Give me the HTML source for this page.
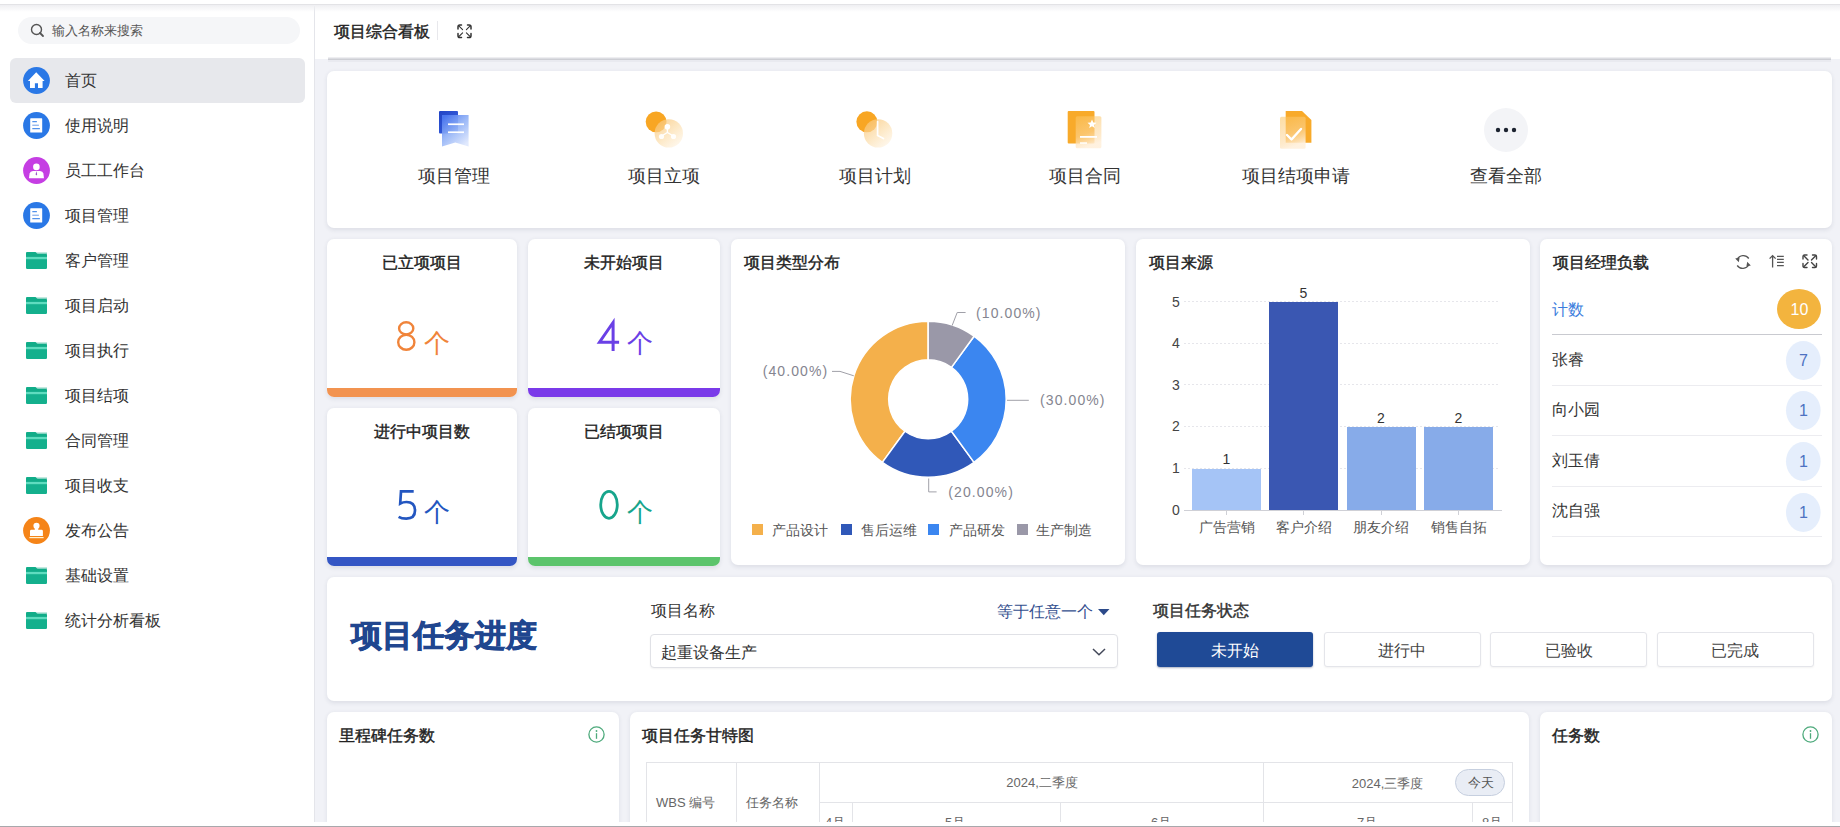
<!DOCTYPE html><html><head><meta charset="utf-8"><style>
*{box-sizing:border-box;margin:0;padding:0}
html,body{width:1840px;height:827px;overflow:hidden;background:#fff;font-family:"Liberation Sans",sans-serif;color:#333}
.abs{position:absolute}
svg{position:absolute;overflow:visible}
.tx{position:absolute;white-space:nowrap;line-height:1}
</style></head><body>
<div class="abs" style="left:315px;top:6px;width:1525px;height:816px;background:#f1f2f7"></div>
<div class="abs" style="left:314px;top:6px;width:1px;height:816px;background:#e4e5ea"></div>
<div class="abs" style="left:315px;top:6px;width:1525px;height:53px;background:#fff"></div>
<div class="abs" style="left:0px;top:0px;width:1840px;height:4px;background:#fff"></div>
<div class="abs" style="left:0px;top:4px;width:1840px;height:1px;background:#e3e3e6"></div>
<div class="abs" style="left:0px;top:5px;width:1840px;height:7px;background:linear-gradient(#efeff2,rgba(255,255,255,0))"></div>
<div class="abs" style="left:328px;top:57px;width:1503px;height:1px;background:#eeeef1"></div>
<div class="abs" style="left:328px;top:58px;width:1503px;height:1px;background:#dcdde2"></div>
<div class="abs" style="left:328px;top:59px;width:1503px;height:1px;background:#cdced4"></div>
<div class="abs" style="left:328px;top:60px;width:1503px;height:2px;background:#e9eaf0"></div>
<div class="abs" style="left:0px;top:822px;width:1840px;height:4px;background:#fff"></div>
<div class="abs" style="left:0px;top:826px;width:1840px;height:1px;background:#a8a8ac"></div>
<div class="abs" style="left:18px;top:17px;width:282px;height:27px;background:#f5f6f8;border-radius:14px"></div>
<svg style="left:30px;top:23px" width="16" height="16" viewBox="0 0 16 16"><circle cx="6.5" cy="6.5" r="5" fill="none" stroke="#555" stroke-width="1.4"/><line x1="10" y1="10" x2="13" y2="13" stroke="#555" stroke-width="1.8" stroke-linecap="round"/></svg>
<div class="tx" style="left:52px;top:24.00px;font-size:13px;color:#555;font-weight:normal;">输入名称来搜索</div>
<div class="abs" style="left:10px;top:58px;width:295px;height:45px;background:#e7e8ec;border-radius:6px"></div>
<svg style="left:23px;top:67.0px" width="27" height="27" viewBox="0 0 27 27"><circle cx="13.5" cy="13.5" r="13.4" fill="#2a78e6"/><path d="M13.2 5.3 L21.6 14 L19.6 14 L19.6 20.9 L15 20.9 L15 16.2 L11.9 16.2 L11.9 20.9 L7 20.9 L7 14 L4.9 14 Z" fill="#fff"/></svg>
<div class="tx" style="left:65px;top:73.30px;font-size:16px;color:#333;font-weight:normal;">首页</div>
<svg style="left:23px;top:112.0px" width="27" height="27" viewBox="0 0 27 27"><circle cx="13.5" cy="13.5" r="13.4" fill="#2a78e6"/><rect x="7.2" y="6.3" width="12" height="14.2" rx="0.6" fill="#fff"/><rect x="9.3" y="9.2" width="4.6" height="1" fill="#2a78e6"/><rect x="9.3" y="12.7" width="6.6" height="1" fill="#6b9ce8"/><rect x="9.3" y="16.2" width="7.6" height="1" fill="#2a78e6"/></svg>
<div class="tx" style="left:65px;top:118.30px;font-size:16px;color:#333;font-weight:normal;">使用说明</div>
<svg style="left:23px;top:157.0px" width="27" height="27" viewBox="0 0 27 27"><circle cx="13.5" cy="13.5" r="13.4" fill="#c53ee3"/><circle cx="13.4" cy="9.9" r="3.3" fill="#fff"/><path d="M6 21.2 L6.6 16.5 Q7.2 14 10 14 L17 14 Q19.8 14 20.4 16.5 L21 21.2 Z" fill="#fff"/><path d="M13.4 14 L12.6 17.5 L13.4 18.6 L14.2 17.5 Z" fill="#9b55c8"/></svg>
<div class="tx" style="left:65px;top:163.30px;font-size:16px;color:#333;font-weight:normal;">员工工作台</div>
<svg style="left:23px;top:202.0px" width="27" height="27" viewBox="0 0 27 27"><circle cx="13.5" cy="13.5" r="13.4" fill="#2a78e6"/><rect x="7.2" y="6.3" width="12" height="14.2" rx="0.6" fill="#fff"/><rect x="9.3" y="9.2" width="4.6" height="1" fill="#2a78e6"/><rect x="9.3" y="12.7" width="6.6" height="1" fill="#6b9ce8"/><rect x="9.3" y="16.2" width="7.6" height="1" fill="#2a78e6"/></svg>
<div class="tx" style="left:65px;top:208.30px;font-size:16px;color:#333;font-weight:normal;">项目管理</div>
<svg style="left:26px;top:251.8px" width="21" height="17" viewBox="0 0 21 17"><path d="M0 1.2 Q0 0 1.2 0 L9.5 0 L11.5 1.9 L19.8 1.9 Q21 1.9 21 3.1 L21 15.8 Q21 17 19.8 17 L1.2 17 Q0 17 0 15.8 Z" fill="#14b08d"/><rect x="0" y="4.8" width="21" height="2.4" fill="#5fdcbf"/><rect x="0" y="0.5" width="21" height="4.3" fill="#0ea884" opacity="0.5"/></svg>
<div class="tx" style="left:65px;top:253.30px;font-size:16px;color:#333;font-weight:normal;">客户管理</div>
<svg style="left:26px;top:296.8px" width="21" height="17" viewBox="0 0 21 17"><path d="M0 1.2 Q0 0 1.2 0 L9.5 0 L11.5 1.9 L19.8 1.9 Q21 1.9 21 3.1 L21 15.8 Q21 17 19.8 17 L1.2 17 Q0 17 0 15.8 Z" fill="#14b08d"/><rect x="0" y="4.8" width="21" height="2.4" fill="#5fdcbf"/><rect x="0" y="0.5" width="21" height="4.3" fill="#0ea884" opacity="0.5"/></svg>
<div class="tx" style="left:65px;top:298.30px;font-size:16px;color:#333;font-weight:normal;">项目启动</div>
<svg style="left:26px;top:341.8px" width="21" height="17" viewBox="0 0 21 17"><path d="M0 1.2 Q0 0 1.2 0 L9.5 0 L11.5 1.9 L19.8 1.9 Q21 1.9 21 3.1 L21 15.8 Q21 17 19.8 17 L1.2 17 Q0 17 0 15.8 Z" fill="#14b08d"/><rect x="0" y="4.8" width="21" height="2.4" fill="#5fdcbf"/><rect x="0" y="0.5" width="21" height="4.3" fill="#0ea884" opacity="0.5"/></svg>
<div class="tx" style="left:65px;top:343.30px;font-size:16px;color:#333;font-weight:normal;">项目执行</div>
<svg style="left:26px;top:386.8px" width="21" height="17" viewBox="0 0 21 17"><path d="M0 1.2 Q0 0 1.2 0 L9.5 0 L11.5 1.9 L19.8 1.9 Q21 1.9 21 3.1 L21 15.8 Q21 17 19.8 17 L1.2 17 Q0 17 0 15.8 Z" fill="#14b08d"/><rect x="0" y="4.8" width="21" height="2.4" fill="#5fdcbf"/><rect x="0" y="0.5" width="21" height="4.3" fill="#0ea884" opacity="0.5"/></svg>
<div class="tx" style="left:65px;top:388.30px;font-size:16px;color:#333;font-weight:normal;">项目结项</div>
<svg style="left:26px;top:431.8px" width="21" height="17" viewBox="0 0 21 17"><path d="M0 1.2 Q0 0 1.2 0 L9.5 0 L11.5 1.9 L19.8 1.9 Q21 1.9 21 3.1 L21 15.8 Q21 17 19.8 17 L1.2 17 Q0 17 0 15.8 Z" fill="#14b08d"/><rect x="0" y="4.8" width="21" height="2.4" fill="#5fdcbf"/><rect x="0" y="0.5" width="21" height="4.3" fill="#0ea884" opacity="0.5"/></svg>
<div class="tx" style="left:65px;top:433.30px;font-size:16px;color:#333;font-weight:normal;">合同管理</div>
<svg style="left:26px;top:476.8px" width="21" height="17" viewBox="0 0 21 17"><path d="M0 1.2 Q0 0 1.2 0 L9.5 0 L11.5 1.9 L19.8 1.9 Q21 1.9 21 3.1 L21 15.8 Q21 17 19.8 17 L1.2 17 Q0 17 0 15.8 Z" fill="#14b08d"/><rect x="0" y="4.8" width="21" height="2.4" fill="#5fdcbf"/><rect x="0" y="0.5" width="21" height="4.3" fill="#0ea884" opacity="0.5"/></svg>
<div class="tx" style="left:65px;top:478.30px;font-size:16px;color:#333;font-weight:normal;">项目收支</div>
<svg style="left:23px;top:517.0px" width="27" height="27" viewBox="0 0 27 27"><circle cx="13.5" cy="13.5" r="13.4" fill="#f58418"/><path d="M13.5 5.8 Q16.6 5.8 16.6 8.8 Q16.6 10.8 15.2 11.8 L15.2 12.8 L18.6 12.8 Q19.9 12.8 19.9 14.2 L19.9 18.9 L7 18.9 L7 14.2 Q7 12.8 8.4 12.8 L11.8 12.8 L11.8 11.8 Q10.4 10.8 10.4 8.8 Q10.4 5.8 13.5 5.8 Z" fill="#fff"/><rect x="6.4" y="20" width="14.2" height="1.2" fill="#fff3d0"/></svg>
<div class="tx" style="left:65px;top:523.30px;font-size:16px;color:#333;font-weight:normal;">发布公告</div>
<svg style="left:26px;top:566.8px" width="21" height="17" viewBox="0 0 21 17"><path d="M0 1.2 Q0 0 1.2 0 L9.5 0 L11.5 1.9 L19.8 1.9 Q21 1.9 21 3.1 L21 15.8 Q21 17 19.8 17 L1.2 17 Q0 17 0 15.8 Z" fill="#14b08d"/><rect x="0" y="4.8" width="21" height="2.4" fill="#5fdcbf"/><rect x="0" y="0.5" width="21" height="4.3" fill="#0ea884" opacity="0.5"/></svg>
<div class="tx" style="left:65px;top:568.30px;font-size:16px;color:#333;font-weight:normal;">基础设置</div>
<svg style="left:26px;top:611.8px" width="21" height="17" viewBox="0 0 21 17"><path d="M0 1.2 Q0 0 1.2 0 L9.5 0 L11.5 1.9 L19.8 1.9 Q21 1.9 21 3.1 L21 15.8 Q21 17 19.8 17 L1.2 17 Q0 17 0 15.8 Z" fill="#14b08d"/><rect x="0" y="4.8" width="21" height="2.4" fill="#5fdcbf"/><rect x="0" y="0.5" width="21" height="4.3" fill="#0ea884" opacity="0.5"/></svg>
<div class="tx" style="left:65px;top:613.30px;font-size:16px;color:#333;font-weight:normal;">统计分析看板</div>
<div class="tx" style="left:333.5px;top:23.80px;font-size:16px;color:#222;font-weight:normal;;-webkit-text-stroke:0.4px #222">项目综合看板</div>
<div class="abs" style="left:437px;top:21px;width:1px;height:19px;background:#e8e8ec"></div>
<svg style="left:457px;top:23.5px" width="15" height="15" viewBox="0 0 15 15"><g fill="none" stroke="#333" stroke-width="1.5" stroke-linecap="round"><path d="M1 5 V2.8 Q1 1 2.8 1 H4.5"/><path d="M10.5 1 H12.2 Q14 1 14 2.8 V5"/><path d="M14 9.5 V11.7 Q14 13.5 12.2 13.5 H10.5"/><path d="M4.5 13.5 H2.8 Q1 13.5 1 11.7 V9.5"/><path d="M1.8 1.8 L5.6 5.6 M13.2 1.8 L9.4 5.6 M13.2 12.7 L9.4 8.9 M1.8 12.7 L5.6 8.9" stroke-width="1.1"/></g></svg>
<div class="abs" style="left:327px;top:71px;width:1505px;height:157px;background:#fff;border-radius:7px;box-shadow:0 1.5px 4px rgba(40,45,80,0.10)"></div>
<div class="tx" style="left:154.0px;width:600px;text-align:center;top:166.50px;font-size:18px;color:#333;font-weight:normal;">项目管理</div>
<div class="tx" style="left:364.4px;width:600px;text-align:center;top:166.50px;font-size:18px;color:#333;font-weight:normal;">项目立项</div>
<div class="tx" style="left:574.8px;width:600px;text-align:center;top:166.50px;font-size:18px;color:#333;font-weight:normal;">项目计划</div>
<div class="tx" style="left:785.2px;width:600px;text-align:center;top:166.50px;font-size:18px;color:#333;font-weight:normal;">项目合同</div>
<div class="tx" style="left:995.5999999999999px;width:600px;text-align:center;top:166.50px;font-size:18px;color:#333;font-weight:normal;">项目结项申请</div>
<div class="tx" style="left:1206.0px;width:600px;text-align:center;top:166.50px;font-size:18px;color:#333;font-weight:normal;">查看全部</div>
<svg style="left:436px;top:109px" width="36" height="40" viewBox="0 0 36 40"><defs><linearGradient id="g1" x1="0" y1="0" x2="1" y2="1"><stop offset="0" stop-color="#2143c4"/><stop offset="1" stop-color="#3a64e4"/></linearGradient><linearGradient id="g1b" x1="0.1" y1="0.05" x2="0.8" y2="1"><stop offset="0" stop-color="#4c78f0" stop-opacity="0.95"/><stop offset="0.45" stop-color="#8fb0f6" stop-opacity="0.9"/><stop offset="1" stop-color="#dfe8fd" stop-opacity="0.95"/></linearGradient></defs><rect x="3" y="2" width="19" height="22.5" rx="1" fill="url(#g1)"/><path d="M6 6 H32.6 V37.4 L19.3 33.6 L6 37.4 Z" fill="url(#g1b)"/><rect x="12" y="14.4" width="16" height="1.7" fill="#fff"/><rect x="12" y="22.4" width="16" height="1.7" fill="#fff"/></svg>
<svg style="left:634px;top:100px" width="50" height="50" viewBox="0 0 50 50"><defs><linearGradient id="g2" x1="0.15" y1="0.1" x2="0.85" y2="0.95"><stop offset="0" stop-color="#f9c77a" stop-opacity="0.75"/><stop offset="0.5" stop-color="#fcdfae" stop-opacity="0.7"/><stop offset="1" stop-color="#fef3e2" stop-opacity="0.6"/></linearGradient></defs><circle cx="22.1" cy="21.8" r="10.4" fill="#f8a623"/><circle cx="34.8" cy="33.4" r="14.2" fill="url(#g2)"/><circle cx="33.4" cy="26.8" r="2.8" fill="#fff"/><circle cx="27.5" cy="36.5" r="2.6" fill="#fff" opacity="0.9"/><circle cx="39.5" cy="36.5" r="2.6" fill="#fff" opacity="0.9"/><path d="M33.4 28 V33 M28.5 35.5 L33.4 32.5 L38.5 35.5" stroke="#fff" stroke-width="1.3" fill="none"/></svg>
<svg style="left:844px;top:100px" width="50" height="50" viewBox="0 0 50 50"><defs><linearGradient id="g3" x1="0.15" y1="0.1" x2="0.85" y2="0.95"><stop offset="0" stop-color="#f9c77a" stop-opacity="0.75"/><stop offset="0.5" stop-color="#fcdfae" stop-opacity="0.7"/><stop offset="1" stop-color="#fef3e2" stop-opacity="0.6"/></linearGradient></defs><circle cx="22.9" cy="21.8" r="10.5" fill="#f8a623"/><circle cx="34.1" cy="33.4" r="14.2" fill="url(#g3)"/><path d="M33.6 21.5 V35.5 L39.5 38.5" stroke="#fff" stroke-width="1.7" fill="none" stroke-linecap="round"/></svg>
<svg style="left:1055px;top:100px" width="50" height="50" viewBox="0 0 50 50"><defs><linearGradient id="g4" x1="0" y1="0" x2="0.3" y2="1"><stop offset="0" stop-color="#fbc25a" stop-opacity="0.6"/><stop offset="0.6" stop-color="#fdd79a" stop-opacity="0.6"/><stop offset="1" stop-color="#fff0dc" stop-opacity="0.9"/></linearGradient></defs><rect x="12.7" y="10.9" width="26.8" height="32.6" rx="1" fill="#f8aa2a"/><rect x="20.7" y="16.3" width="25.7" height="32" rx="1.5" fill="url(#g4)"/><path d="M37 19.5 L38.3 22.5 L41.5 22.8 L39 24.9 L39.8 28 L37 26.3 L34.2 28 L35 24.9 L32.5 22.8 L35.7 22.5 Z" fill="#fff"/><rect x="25" y="36" width="17" height="1.8" fill="#fff"/><rect x="25" y="42.3" width="7" height="1.5" fill="#fff"/></svg>
<svg style="left:1265px;top:100px" width="50" height="50" viewBox="0 0 50 50"><defs><linearGradient id="g5" x1="0" y1="0" x2="0.3" y2="1"><stop offset="0" stop-color="#fbc25a" stop-opacity="0.55"/><stop offset="0.6" stop-color="#fdd79a" stop-opacity="0.6"/><stop offset="1" stop-color="#fff0dc" stop-opacity="0.9"/></linearGradient></defs><path d="M20.7 10.9 H37 L46.4 20 V42.8 H20.7 Z" fill="#f8aa2a"/><rect x="15" y="16.7" width="25.6" height="32" rx="1.5" fill="url(#g5)"/><path d="M22 35 L26.5 39.5 L36 29" stroke="#fff" stroke-width="2.4" fill="none" stroke-linecap="round" stroke-linejoin="round"/></svg>
<svg style="left:1483.5px;top:108px" width="44" height="44" viewBox="0 0 44 44"><circle cx="22" cy="22" r="22" fill="#f3f4f7"/><circle cx="14" cy="22" r="2.2" fill="#1c2330"/><circle cx="22" cy="22" r="2.2" fill="#1c2330"/><circle cx="30" cy="22" r="2.2" fill="#1c2330"/></svg>
<div class="abs" style="left:327px;top:239px;width:190px;height:158px;background:#fff;border-radius:7px;box-shadow:0 1.5px 4px rgba(40,45,80,0.10)"></div>
<div class="abs" style="left:327px;top:388px;width:190px;height:9px;background:#f29350;border-radius:0 0 7px 7px"></div>
<div class="tx" style="left:122.0px;width:600px;text-align:center;top:254.80px;font-size:16px;color:#222;font-weight:normal;;-webkit-text-stroke:0.4px #222">已立项项目</div>
<div class="abs" style="left:528px;top:239px;width:192px;height:158px;background:#fff;border-radius:7px;box-shadow:0 1.5px 4px rgba(40,45,80,0.10)"></div>
<div class="abs" style="left:528px;top:388px;width:192px;height:9px;background:#7a3ae9;border-radius:0 0 7px 7px"></div>
<div class="tx" style="left:324.0px;width:600px;text-align:center;top:254.80px;font-size:16px;color:#222;font-weight:normal;;-webkit-text-stroke:0.4px #222">未开始项目</div>
<div class="abs" style="left:327px;top:408px;width:190px;height:158px;background:#fff;border-radius:7px;box-shadow:0 1.5px 4px rgba(40,45,80,0.10)"></div>
<div class="abs" style="left:327px;top:557px;width:190px;height:9px;background:#3456c4;border-radius:0 0 7px 7px"></div>
<div class="tx" style="left:122.0px;width:600px;text-align:center;top:423.80px;font-size:16px;color:#222;font-weight:normal;;-webkit-text-stroke:0.4px #222">进行中项目数</div>
<div class="abs" style="left:528px;top:408px;width:192px;height:158px;background:#fff;border-radius:7px;box-shadow:0 1.5px 4px rgba(40,45,80,0.10)"></div>
<div class="abs" style="left:528px;top:557px;width:192px;height:9px;background:#5cc46c;border-radius:0 0 7px 7px"></div>
<div class="tx" style="left:324.0px;width:600px;text-align:center;top:423.80px;font-size:16px;color:#222;font-weight:normal;;-webkit-text-stroke:0.4px #222">已结项项目</div>
<svg style="left:0;top:0" width="1840" height="827"><g fill="none" stroke="#f0843a" stroke-width="2.4"><ellipse cx="406.2" cy="328.4" rx="7.1" ry="6.1"/><ellipse cx="406.3" cy="342.2" rx="8.1" ry="7.5"/></g><g fill="none" stroke="#6a40e6" stroke-width="3"><path d="M613.1 350.9 V322.5 L599.5 342.2 H619.1" stroke-linejoin="miter"/></g><path d="M413.7 491.3 H401 L400.2 503.6 Q403 502 406.5 502 Q415 502 415 510.5 Q415 518.6 406.3 518.6 Q401.5 518.6 398.6 516.8" fill="none" stroke="#2356c0" stroke-width="2.7"/><ellipse cx="609" cy="504.8" rx="8.3" ry="13.5" fill="none" stroke="#17a58c" stroke-width="2.8"/></svg>
<div class="tx" style="left:423.7px;top:329.7px;font-size:26px;color:#f0843a">个</div>
<div class="tx" style="left:626.8px;top:329.7px;font-size:26px;color:#6a40e6">个</div>
<div class="tx" style="left:424.1px;top:498.7px;font-size:26px;color:#2356c0">个</div>
<div class="tx" style="left:626.5px;top:498.7px;font-size:26px;color:#17a58c">个</div>
<div class="abs" style="left:731px;top:239px;width:394px;height:326px;background:#fff;border-radius:7px;box-shadow:0 1.5px 4px rgba(40,45,80,0.10)"></div>
<div class="abs" style="left:1136px;top:239px;width:394px;height:326px;background:#fff;border-radius:7px;box-shadow:0 1.5px 4px rgba(40,45,80,0.10)"></div>
<div class="abs" style="left:1540px;top:239px;width:292px;height:326px;background:#fff;border-radius:7px;box-shadow:0 1.5px 4px rgba(40,45,80,0.10)"></div>
<div class="tx" style="left:743.5px;top:254.80px;font-size:16px;color:#222;font-weight:normal;;-webkit-text-stroke:0.4px #222">项目类型分布</div>
<div class="tx" style="left:1148.5px;top:254.80px;font-size:16px;color:#222;font-weight:normal;;-webkit-text-stroke:0.4px #222">项目来源</div>
<div class="tx" style="left:1552.5px;top:254.80px;font-size:16px;color:#222;font-weight:normal;;-webkit-text-stroke:0.4px #222">项目经理负载</div>
<svg style="left:0;top:0" width="1840" height="827"><path d="M928.20 321.30 A78 78 0 0 0 882.35 462.40 L904.98 431.26 A39.5 39.5 0 0 1 928.20 359.80 Z" fill="#f4b04b" stroke="#fff" stroke-width="1.5" stroke-linejoin="round"/><path d="M882.35 462.40 A78 78 0 0 0 974.05 462.40 L951.42 431.26 A39.5 39.5 0 0 1 904.98 431.26 Z" fill="#3058b8" stroke="#fff" stroke-width="1.5" stroke-linejoin="round"/><path d="M974.05 462.40 A78 78 0 0 0 974.05 336.20 L951.42 367.34 A39.5 39.5 0 0 1 951.42 431.26 Z" fill="#3b86f0" stroke="#fff" stroke-width="1.5" stroke-linejoin="round"/><path d="M974.05 336.20 A78 78 0 0 0 928.20 321.30 L928.20 359.80 A39.5 39.5 0 0 1 951.42 367.34 Z" fill="#9a98a8" stroke="#fff" stroke-width="1.5" stroke-linejoin="round"/><g fill="none" stroke="#a0a0a8" stroke-width="1"><path d="M952.1 325.6 L957.2 312.5 L965.6 312.5"/><path d="M1007 400.3 L1028.8 400.3"/><path d="M928.7 478.5 L928.7 491.9 L936.6 491.9"/><path d="M853.8 375.8 L840 371.4 L832 371.4"/></g></svg>
<div class="tx" style="left:976px;top:305.70px;font-size:14px;color:#858590;font-weight:normal;letter-spacing:1.1px">(10.00%)</div>
<div class="tx" style="left:1040px;top:393.30px;font-size:14px;color:#858590;font-weight:normal;letter-spacing:1.1px">(30.00%)</div>
<div class="tx" style="left:948.3px;top:484.80px;font-size:14px;color:#858590;font-weight:normal;letter-spacing:1.1px">(20.00%)</div>
<div class="tx" style="left:762.7px;top:364.20px;font-size:14px;color:#858590;font-weight:normal;letter-spacing:1.1px">(40.00%)</div>
<div class="abs" style="left:752px;top:524px;width:11px;height:11px;background:#f4b04b"></div>
<div class="tx" style="left:772.3px;top:524.15px;font-size:13.5px;color:#555;font-weight:normal;">产品设计</div>
<div class="abs" style="left:840.5px;top:524px;width:11px;height:11px;background:#3058b8"></div>
<div class="tx" style="left:861px;top:524.15px;font-size:13.5px;color:#555;font-weight:normal;">售后运维</div>
<div class="abs" style="left:928px;top:524px;width:11px;height:11px;background:#3b86f0"></div>
<div class="tx" style="left:948.5px;top:524.15px;font-size:13.5px;color:#555;font-weight:normal;">产品研发</div>
<div class="abs" style="left:1016.5px;top:524px;width:11px;height:11px;background:#9a98a8"></div>
<div class="tx" style="left:1036px;top:524.15px;font-size:13.5px;color:#555;font-weight:normal;">生产制造</div>
<div class="tx" style="left:876px;width:600px;text-align:center;top:502.60px;font-size:14px;color:#444;font-weight:normal;">0</div>
<div class="tx" style="left:876px;width:600px;text-align:center;top:461.00px;font-size:14px;color:#444;font-weight:normal;">1</div>
<div class="abs" style="left:1184px;top:467.59999999999997px;width:314px;height:1px;background-image:linear-gradient(90deg,#e6e6eb 60%,transparent 60%);background-size:4px 1px"></div>
<div class="tx" style="left:876px;width:600px;text-align:center;top:419.40px;font-size:14px;color:#444;font-weight:normal;">2</div>
<div class="abs" style="left:1184px;top:426.0px;width:314px;height:1px;background-image:linear-gradient(90deg,#e6e6eb 60%,transparent 60%);background-size:4px 1px"></div>
<div class="tx" style="left:876px;width:600px;text-align:center;top:377.80px;font-size:14px;color:#444;font-weight:normal;">3</div>
<div class="abs" style="left:1184px;top:384.4px;width:314px;height:1px;background-image:linear-gradient(90deg,#e6e6eb 60%,transparent 60%);background-size:4px 1px"></div>
<div class="tx" style="left:876px;width:600px;text-align:center;top:336.20px;font-size:14px;color:#444;font-weight:normal;">4</div>
<div class="abs" style="left:1184px;top:342.79999999999995px;width:314px;height:1px;background-image:linear-gradient(90deg,#e6e6eb 60%,transparent 60%);background-size:4px 1px"></div>
<div class="tx" style="left:876px;width:600px;text-align:center;top:294.60px;font-size:14px;color:#444;font-weight:normal;">5</div>
<div class="abs" style="left:1184px;top:301.2px;width:314px;height:1px;background-image:linear-gradient(90deg,#e6e6eb 60%,transparent 60%);background-size:4px 1px"></div>
<div class="abs" style="left:1184px;top:510px;width:318px;height:1px;background:#cfd0d6"></div>
<div class="abs" style="left:1192px;top:468.59999999999997px;width:69px;height:41.60000000000002px;background:#a5c4f6"></div>
<div class="tx" style="left:926.5px;width:600px;text-align:center;top:452.30px;font-size:14px;color:#333;font-weight:normal;">1</div>
<div class="abs" style="left:1226px;top:511px;width:1px;height:4px;background:#cfd0d6"></div>
<div class="tx" style="left:926.5px;width:600px;text-align:center;top:519.90px;font-size:14px;color:#555;font-weight:normal;">广告营销</div>
<div class="abs" style="left:1269px;top:302.2px;width:69px;height:208.0px;background:#3a57b2"></div>
<div class="tx" style="left:1003.5px;width:600px;text-align:center;top:285.90px;font-size:14px;color:#333;font-weight:normal;">5</div>
<div class="abs" style="left:1303px;top:511px;width:1px;height:4px;background:#cfd0d6"></div>
<div class="tx" style="left:1003.5px;width:600px;text-align:center;top:519.90px;font-size:14px;color:#555;font-weight:normal;">客户介绍</div>
<div class="abs" style="left:1346.5px;top:427.0px;width:69px;height:83.19999999999999px;background:#87abe9"></div>
<div class="tx" style="left:1081.0px;width:600px;text-align:center;top:410.70px;font-size:14px;color:#333;font-weight:normal;">2</div>
<div class="abs" style="left:1380.5px;top:511px;width:1px;height:4px;background:#cfd0d6"></div>
<div class="tx" style="left:1081.0px;width:600px;text-align:center;top:519.90px;font-size:14px;color:#555;font-weight:normal;">朋友介绍</div>
<div class="abs" style="left:1424px;top:427.0px;width:69px;height:83.19999999999999px;background:#87abe9"></div>
<div class="tx" style="left:1158.5px;width:600px;text-align:center;top:410.70px;font-size:14px;color:#333;font-weight:normal;">2</div>
<div class="abs" style="left:1458px;top:511px;width:1px;height:4px;background:#cfd0d6"></div>
<div class="tx" style="left:1158.5px;width:600px;text-align:center;top:519.90px;font-size:14px;color:#555;font-weight:normal;">销售自拓</div>
<svg style="left:1734px;top:253px" width="18" height="18" viewBox="0 0 18 18"><g fill="none" stroke="#555" stroke-width="1.3"><path d="M3.2 6.5 A6.8 6.8 0 0 1 14.8 5.5"/><path d="M14.8 11.5 A6.8 6.8 0 0 1 3.2 12.5"/></g><path d="M1.2 5.5 L4.8 9.2 L5.6 4.4 Z" fill="#555"/><path d="M16.8 12.5 L13.2 8.8 L12.4 13.6 Z" fill="#555"/></svg>
<svg style="left:1768px;top:254px" width="18" height="15" viewBox="0 0 18 15"><g stroke="#555" fill="none"><path d="M4.6 13.5 V1.8 M1.6 4.6 L4.6 1.6 L7.6 4.6" stroke-width="1.3"/><path d="M9 2.4 H15.8 M9 5.4 H15.8 M9 8.4 H15.8 M9 11.7 H15.8" stroke-width="1.2"/></g></svg>
<svg style="left:1802px;top:254px" width="16" height="15" viewBox="0 0 16 15"><g fill="none" stroke="#444" stroke-width="1.4" stroke-linecap="round"><path d="M1 5 V2.5 Q1 1 2.5 1 H5"/><path d="M10.5 1 H13 Q14.5 1 14.5 2.5 V5"/><path d="M14.5 9.5 V12 Q14.5 13.5 13 13.5 H10.5"/><path d="M5 13.5 H2.5 Q1 13.5 1 12 V9.5"/><path d="M1.8 1.8 L6 6 M13.7 1.8 L9.5 6 M13.7 12.7 L9.5 8.5 M1.8 12.7 L6 8.5"/></g></svg>
<div class="tx" style="left:1552px;top:302.20px;font-size:16px;color:#3b7ddd;font-weight:normal;">计数</div>
<svg style="left:1777px;top:289px" width="44" height="40" viewBox="0 0 44 40"><ellipse cx="22" cy="20" rx="22" ry="20" fill="#f3b43e"/></svg>
<div class="tx" style="left:1499.5px;width:600px;text-align:center;top:301.80px;font-size:16px;color:#fff;font-weight:normal;">10</div>
<div class="abs" style="left:1552px;top:333.5px;width:270px;height:1px;background:#c9cad0"></div>
<div class="tx" style="left:1552px;top:351.50px;font-size:16px;color:#333;font-weight:normal;">张睿</div>
<svg style="left:1786px;top:340.8px" width="35" height="39" viewBox="0 0 35 39"><ellipse cx="17.3" cy="19.5" rx="17.3" ry="19.5" fill="#e5eefc"/></svg>
<div class="tx" style="left:1503.5px;width:600px;text-align:center;top:352.70px;font-size:16px;color:#4d72c2;font-weight:normal;">7</div>
<div class="abs" style="left:1552px;top:384.5px;width:270px;height:1px;background:#ececf0"></div>
<div class="tx" style="left:1552px;top:402.10px;font-size:16px;color:#333;font-weight:normal;">向小园</div>
<svg style="left:1786px;top:391.40000000000003px" width="35" height="39" viewBox="0 0 35 39"><ellipse cx="17.3" cy="19.5" rx="17.3" ry="19.5" fill="#e5eefc"/></svg>
<div class="tx" style="left:1503.5px;width:600px;text-align:center;top:403.30px;font-size:16px;color:#4d72c2;font-weight:normal;">1</div>
<div class="abs" style="left:1552px;top:435.1px;width:270px;height:1px;background:#ececf0"></div>
<div class="tx" style="left:1552px;top:452.70px;font-size:16px;color:#333;font-weight:normal;">刘玉倩</div>
<svg style="left:1786px;top:442.0px" width="35" height="39" viewBox="0 0 35 39"><ellipse cx="17.3" cy="19.5" rx="17.3" ry="19.5" fill="#e5eefc"/></svg>
<div class="tx" style="left:1503.5px;width:600px;text-align:center;top:453.90px;font-size:16px;color:#4d72c2;font-weight:normal;">1</div>
<div class="abs" style="left:1552px;top:485.7px;width:270px;height:1px;background:#ececf0"></div>
<div class="tx" style="left:1552px;top:503.30px;font-size:16px;color:#333;font-weight:normal;">沈自强</div>
<svg style="left:1786px;top:492.6px" width="35" height="39" viewBox="0 0 35 39"><ellipse cx="17.3" cy="19.5" rx="17.3" ry="19.5" fill="#e5eefc"/></svg>
<div class="tx" style="left:1503.5px;width:600px;text-align:center;top:504.50px;font-size:16px;color:#4d72c2;font-weight:normal;">1</div>
<div class="abs" style="left:1552px;top:536.3px;width:270px;height:1px;background:#ececf0"></div>
<div class="abs" style="left:327px;top:577px;width:1505px;height:124px;background:#fff;border-radius:7px;box-shadow:0 1.5px 4px rgba(40,45,80,0.10)"></div>
<div class="tx" style="left:351px;top:620px;font-size:31px;font-weight:bold;color:#20468f;-webkit-text-stroke:0.8px #20468f">项目任务进度</div>
<div class="tx" style="left:651px;top:602.50px;font-size:16px;color:#333;font-weight:normal;">项目名称</div>
<div class="tx" style="left:996.5px;top:603.50px;font-size:16px;color:#34508f;font-weight:normal;">等于任意一个</div>
<svg style="left:1097.5px;top:608.5px" width="12" height="7" viewBox="0 0 12 7"><path d="M0 0 H11.5 L5.75 6.3 Z" fill="#2c4a8a"/></svg>
<div class="abs" style="left:650px;top:634px;width:468px;height:34px;border:1px solid #e0e1e6;border-radius:4px;background:#fff;box-shadow:0 1px 2px rgba(0,0,0,0.05)"></div>
<div class="tx" style="left:660.5px;top:644.80px;font-size:16px;color:#333;font-weight:normal;">起重设备生产</div>
<svg style="left:1092px;top:648px" width="14" height="8" viewBox="0 0 14 8"><path d="M1 1 L7 6.8 L13 1" fill="none" stroke="#44495a" stroke-width="1.5"/></svg>
<div class="tx" style="left:1152.5px;top:603.00px;font-size:16px;color:#333;font-weight:normal;;-webkit-text-stroke:0.4px #333">项目任务状态</div>
<div class="abs" style="left:1157.0px;top:632px;width:156px;height:35px;background:#1f4a96;border-radius:3px;box-shadow:0 1px 2px rgba(10,30,80,0.35)"></div>
<div class="tx" style="left:935.0px;width:600px;text-align:center;top:642.60px;font-size:16px;color:#fff;font-weight:normal;">未开始</div>
<div class="abs" style="left:1323.5px;top:632px;width:157px;height:35px;border:1px solid #e4e5ea;border-radius:3px;background:#fff;box-shadow:0 1px 2px rgba(0,0,0,0.05)"></div>
<div class="tx" style="left:1102.0px;width:600px;text-align:center;top:642.60px;font-size:16px;color:#444;font-weight:normal;">进行中</div>
<div class="abs" style="left:1490.0px;top:632px;width:157px;height:35px;border:1px solid #e4e5ea;border-radius:3px;background:#fff;box-shadow:0 1px 2px rgba(0,0,0,0.05)"></div>
<div class="tx" style="left:1268.5px;width:600px;text-align:center;top:642.60px;font-size:16px;color:#444;font-weight:normal;">已验收</div>
<div class="abs" style="left:1656.5px;top:632px;width:157px;height:35px;border:1px solid #e4e5ea;border-radius:3px;background:#fff;box-shadow:0 1px 2px rgba(0,0,0,0.05)"></div>
<div class="tx" style="left:1435.0px;width:600px;text-align:center;top:642.60px;font-size:16px;color:#444;font-weight:normal;">已完成</div>
<div class="abs" style="left:327px;top:712px;width:292px;height:115px;background:#fff;border-radius:7px 7px 0 0;box-shadow:0 1.5px 4px rgba(40,45,80,0.10)"></div>
<div class="abs" style="left:630px;top:712px;width:899px;height:115px;background:#fff;border-radius:7px 7px 0 0;box-shadow:0 1.5px 4px rgba(40,45,80,0.10)"></div>
<div class="abs" style="left:1540px;top:712px;width:292px;height:115px;background:#fff;border-radius:7px 7px 0 0;box-shadow:0 1.5px 4px rgba(40,45,80,0.10)"></div>
<div class="tx" style="left:338.5px;top:727.80px;font-size:16px;color:#222;font-weight:normal;;-webkit-text-stroke:0.4px #222">里程碑任务数</div>
<div class="tx" style="left:641.5px;top:728.20px;font-size:16px;color:#222;font-weight:normal;;-webkit-text-stroke:0.4px #222">项目任务甘特图</div>
<div class="tx" style="left:1551.5px;top:727.80px;font-size:16px;color:#222;font-weight:normal;;-webkit-text-stroke:0.4px #222">任务数</div>
<svg style="left:588.4px;top:726.1px" width="17" height="17" viewBox="0 0 17 17"><circle cx="8.5" cy="8.5" r="7.6" fill="none" stroke="#4eaa7c" stroke-width="1.3"/><rect x="7.85" y="7.2" width="1.3" height="5.6" fill="#4eaa7c"/><circle cx="8.5" cy="5" r="0.9" fill="#4eaa7c"/></svg>
<svg style="left:1802.2px;top:726.1px" width="17" height="17" viewBox="0 0 17 17"><circle cx="8.5" cy="8.5" r="7.6" fill="none" stroke="#4eaa7c" stroke-width="1.3"/><rect x="7.85" y="7.2" width="1.3" height="5.6" fill="#4eaa7c"/><circle cx="8.5" cy="5" r="0.9" fill="#4eaa7c"/></svg>
<div class="abs" style="left:646px;top:762px;width:867px;height:1px;background:#e3e4e8"></div>
<div class="abs" style="left:646px;top:762px;width:1px;height:60px;background:#e3e4e8"></div>
<div class="abs" style="left:736px;top:762px;width:1px;height:60px;background:#e3e4e8"></div>
<div class="abs" style="left:819px;top:762px;width:1px;height:60px;background:#e3e4e8"></div>
<div class="abs" style="left:1512px;top:762px;width:1px;height:60px;background:#e3e4e8"></div>
<div class="abs" style="left:1263px;top:762px;width:1px;height:60px;background:#e3e4e8"></div>
<div class="abs" style="left:819px;top:802px;width:694px;height:1px;background:#e3e4e8"></div>
<div class="abs" style="left:851.5px;top:802px;width:1px;height:20px;background:#e3e4e8"></div>
<div class="abs" style="left:1059.5px;top:802px;width:1px;height:20px;background:#e3e4e8"></div>
<div class="abs" style="left:1472px;top:802px;width:1px;height:20px;background:#e3e4e8"></div>
<div class="tx" style="left:656px;top:796.30px;font-size:13px;color:#666;font-weight:normal;">WBS 编号</div>
<div class="tx" style="left:746px;top:796.30px;font-size:13px;color:#666;font-weight:normal;">任务名称</div>
<div class="tx" style="left:742px;width:600px;text-align:center;top:776.00px;font-size:13px;color:#666;font-weight:normal;">2024,二季度</div>
<div class="tx" style="left:1087.5px;width:600px;text-align:center;top:776.70px;font-size:13px;color:#666;font-weight:normal;">2024,三季度</div>
<div class="abs" style="left:1455px;top:769px;width:50px;height:27px;background:#e9edf5;border:1px solid #c6cfdf;border-radius:14px"></div>
<div class="tx" style="left:1180.5px;width:600px;text-align:center;top:776.00px;font-size:13px;color:#555;font-weight:normal;">今天</div>
<div class="tx" style="left:535px;width:600px;text-align:center;top:816.00px;font-size:13px;color:#666;font-weight:normal;">4月</div>
<div class="tx" style="left:655px;width:600px;text-align:center;top:816.00px;font-size:13px;color:#666;font-weight:normal;">5月</div>
<div class="tx" style="left:861px;width:600px;text-align:center;top:816.00px;font-size:13px;color:#666;font-weight:normal;">6月</div>
<div class="tx" style="left:1067px;width:600px;text-align:center;top:816.00px;font-size:13px;color:#666;font-weight:normal;">7月</div>
<div class="tx" style="left:1192px;width:600px;text-align:center;top:816.00px;font-size:13px;color:#666;font-weight:normal;">8月</div>
<div class="abs" style="left:0px;top:822px;width:1840px;height:4px;background:#fff"></div>
<div class="abs" style="left:0px;top:826px;width:1840px;height:1px;background:#a8a8ac"></div>
</body></html>
